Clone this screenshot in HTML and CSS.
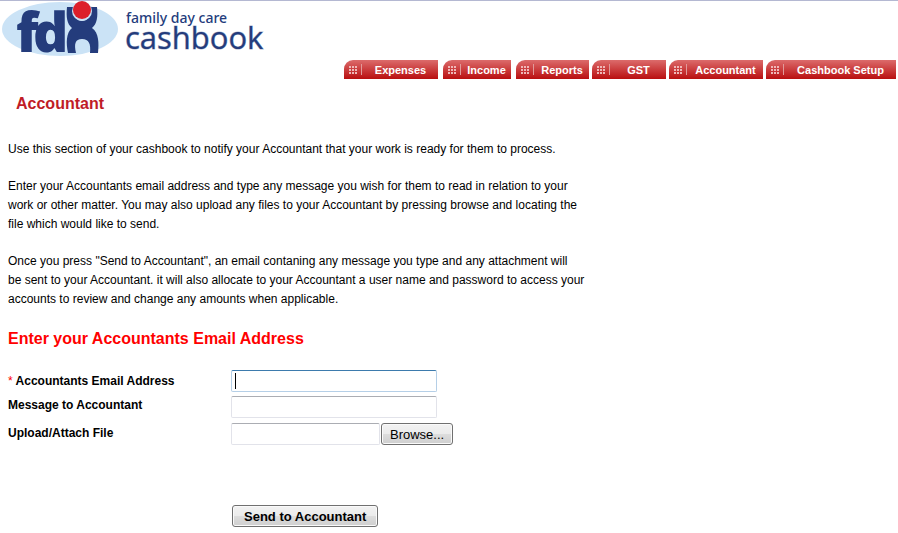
FILE: index.html
```
<!DOCTYPE html>
<html lang="en">
<head>
    <meta charset="UTF-8">
    <meta name="viewport" content="width=device-width, initial-scale=1.0">
    <title>Family Day Care Cashbook - Accountant</title>
    <link rel="stylesheet" href="styles.css">
</head>
<body>
    <header>
        <a class="logo" href="#" aria-label="Family Day Care Cashbook">
            <svg width="270" height="57" viewBox="0 0 270 57">
                <ellipse cx="60" cy="28" rx="58" ry="27" fill="#cbe3f6"/>
                <text class="logo-mark" x="16 33" y="51">fd</text>
                <!-- figure with raised arms -->
                <path d="M67 6 H74 Q74 20 82 20 Q90 20 90 6 H97 C98 16 97 23 92 27 C99 32 99 42 98 52 H90 C91 43 89 38 82 38 C75 38 74 43 76 52 H68 C66 42 66 32 72 27 C67 23 66 16 67 6 Z" fill="#243c7c"/>
                <circle cx="82" cy="10" r="10" fill="#cbe3f6"/>
                <circle cx="82" cy="9" r="9" fill="#dd1f2a"/>
                <text class="logo-small" x="126" y="22">family day care</text>
                <text class="logo-large" x="125" y="48">cashbook</text>
            </svg>
        </a>
        <nav>
            <a class="tab expenses" href="#">Expenses</a>
            <a class="tab income" href="#">Income</a>
            <a class="tab reports" href="#">Reports</a>
            <a class="tab gst" href="#">GST</a>
            <a class="tab accountant" href="#">Accountant</a>
            <a class="tab setup" href="#">Cashbook Setup</a>
        </nav>
    </header>

    <main>
        <h1>Accountant</h1>
        <p>Use this section of your cashbook to notify your Accountant that your work is ready for them to process.</p>
        <p>
            Enter your Accountants email address and type any message you wish for them to read in relation to your<br>
            work or other matter. You may also upload any files to your Accountant by pressing browse and locating the<br>
            file which would like to send.
        </p>
        <p>
            Once you press "Send to Accountant", an email contaning any message you type and any attachment will<br>
            be sent to your Accountant. it will also allocate to your Accountant a user name and password to access your<br>
            accounts to review and change any amounts when applicable.
        </p>

        <h2>Enter your Accountants Email Address</h2>
        <form>
            <label for="email"><span class="required">*</span> Accountants Email Address</label>
            <input type="text" id="email" autofocus>

            <label for="message" class="raised">Message to Accountant</label>
            <input type="text" id="message">

            <label for="file">Upload/Attach File</label>
            <div class="upload">
                <input type="text" id="file">
                <button type="button" class="browse">Browse...</button>
            </div>

            <button type="submit" class="send">Send to Accountant</button>
        </form>
    </main>
</body>
</html>
```

FILE: styles.css
```
body {
    margin: 0;
    border-top: 1px solid #b4b8d2;
    background-color: #fff;
    color: #000;
    font-family: "Liberation Sans", Arial, sans-serif;
    font-size: 12px;
    line-height: 19px;
}
.logo svg {
    display: block;
    overflow: visible;
}
.logo text {
    fill: #243c7c;
    font-family: "Open Sans", sans-serif;
}
.logo .logo-mark {
    font-size: 55px;
    font-weight: 800;
}
.logo .logo-small {
    font-family: "Noto Sans", sans-serif;
    font-size: 14px;
    font-weight: 500;
}
.logo .logo-large {
    font-size: 31px;
    stroke: #243c7c;
    stroke-width: 1px;
    stroke-opacity: 0.4;
}
nav {
    display: flex;
    justify-content: flex-end;
    gap: 3px;
    padding: 2px 2px 0 0;
}
.tab {
    position: relative;
    box-sizing: border-box;
    height: 19px;
    padding-left: 19px;
    border-top-left-radius: 9px;
    background:
        linear-gradient(#e09a9a, #e09a9a) 17px 4px / 1px 11px no-repeat,
        linear-gradient(#dc6b6b, #b90f10);
    color: #fff;
    font-size: 11px;
    font-weight: bold;
    line-height: 20px;
    text-align: center;
    text-decoration: none;
}
/* 3x3 grip dots */
.tab::before {
    content: "";
    position: absolute;
    left: 5px;
    top: 6px;
    width: 8px;
    height: 8px;
    background: repeating-linear-gradient(90deg, #efb8b8 0 2px, transparent 2px 3px);
    -webkit-mask: repeating-linear-gradient(#000 0 2px, transparent 2px 3px);
    mask: repeating-linear-gradient(#000 0 2px, transparent 2px 3px);
}
.expenses,
.accountant {
    width: 94px;
}
.income {
    width: 68px;
}
.reports {
    width: 73px;
}
.gst {
    width: 74px;
}
.setup {
    width: 130px;
}
.expenses,
.income {
    margin-right: 2px;
}
main {
    padding: 0 8px 4px;
}
h1 {
    margin: 15px 8px 26px;
    color: #c01c26;
    font-size: 16px;
    font-weight: bold;
    line-height: 20px;
}
p {
    margin: 0 0 18px;
}
h2 {
    margin: 20px 0 21px;
    color: #f00;
    font-size: 16px;
    line-height: 20px;
}
form {
    display: grid;
    grid-template-columns: 223px 1fr;
    row-gap: 4px;
    align-items: center;
    justify-items: start;
}
label {
    font-weight: bold;
}
.raised {
    align-self: start;
}
.required {
    color: #f00;
    font-weight: normal;
}
input {
    box-sizing: border-box;
    width: 206px;
    height: 22px;
    padding: 1px 3px;
    border: 1px solid #e2e3ea;
    border-top-color: #abadb3;
    border-radius: 2px;
    font-family: inherit;
    font-size: 13px;
}
/* steady caret */
input:focus {
    border-color: #b5cfe7;
    border-top-color: #3d7bad;
    outline: none;
    background: linear-gradient(#000, #000) 3px 2px / 1px 16px no-repeat #fff;
    caret-color: transparent;
}
.upload {
    display: flex;
    gap: 1px;
    margin-top: 1px;
}
.upload input {
    width: 149px;
}
button {
    box-sizing: border-box;
    height: 22px;
    padding: 0 11px;
    border: 1px solid #707070;
    border-radius: 3px;
    background: linear-gradient(#f2f2f2, #ebebeb 50%, #dddddd 50%, #cfcfcf);
    box-shadow: inset 0 0 0 1px #fafafa;
    color: #000;
    font-family: inherit;
    font-size: 13px;
}
.browse {
    padding: 0 8px;
}
.send {
    grid-column: 2;
    margin: 56px 0 0 1px;
    font-weight: bold;
}
```
